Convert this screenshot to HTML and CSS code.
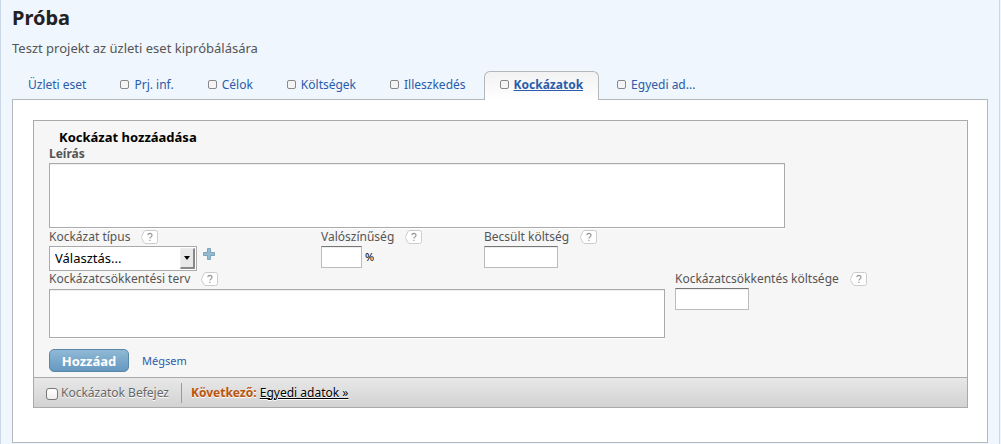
FILE: index.html
```html
<!DOCTYPE html>
<html lang="hu">
<head>
<meta charset="utf-8">
<title>Próba</title>
<link rel="stylesheet" href="styles.css">
</head>
<body>
<svg class="defs" width="0" height="0" aria-hidden="true">
  <symbol id="help" viewBox="0 0 17 15">
    <path d="M5 .5H14.500Q16.500 .5 16.500 2.500V11.500Q16.500 13.500 14.500 13.500H5Q3.500 13.500 2.700 12L.8 8.500Q.4 7.500 .8 6.500L2.700 2Q3.500 .5 5 .5Z" fill="#fff" stroke="#ccc"/>
    <path d="M6.800 5.200Q6.900 3.400 8.900 3.400Q11 3.500 11 5.200Q11 6.200 9.900 6.900Q8.900 7.500 8.900 8.600M8.900 9.700V11" fill="none" stroke="#999" stroke-width="1.200"/>
  </symbol>
</svg>
<div class="page">
  <h1 class="title">Próba</h1>
  <p class="subtitle">Teszt projekt az üzleti eset kipróbálására</p>
  <nav class="tabs">
    <a class="tab" href="#eset">Üzleti eset</a>
    <a class="tab" href="#info"><span class="box"></span>Prj. inf.</a>
    <a class="tab" href="#celok"><span class="box"></span>Célok</a>
    <a class="tab" href="#koltsegek"><span class="box"></span>Költségek</a>
    <a class="tab" href="#illeszkedes"><span class="box"></span>Illeszkedés</a>
    <a class="tab active" href="#kockazatok"><span class="box"></span><span class="current">Kockázatok</span></a>
    <a class="tab" href="#egyedi"><span class="box"></span>Egyedi ad...</a>
  </nav>
  <main class="panel">
    <form class="card">
      <div class="body">
        <h2 class="heading">Kockázat hozzáadása</h2>
        <label class="label strong" for="desc">Leírás</label>
        <textarea class="area desc" id="desc"></textarea>
        <div class="row">
          <div class="field type">
            <div class="label"><label for="type">Kockázat típus</label><svg class="help"><use href="#help"/></svg></div>
            <div class="control">
              <span class="select-wrap">
                <select class="select" id="type"><option>Választás...</option></select>
                <span class="arrow"></span>
              </span>
              <button class="add" type="button" aria-label="+"><svg width="12" height="12" viewBox="0 0 12 12"><path d="M4.500 .5h3v4h4v3h-4v4h-3v-4h-4v-3h4z" fill="#94bad0" stroke="#7ea3bb"/></svg></button>
            </div>
          </div>
          <div class="field chance">
            <div class="label"><label for="chance">Valószínűség</label><svg class="help"><use href="#help"/></svg></div>
            <div class="control"><input class="input small" id="chance" type="text"><span class="unit">%</span></div>
          </div>
          <div class="field">
            <div class="label"><label for="cost">Becsült költség</label><svg class="help"><use href="#help"/></svg></div>
            <div class="control"><input class="input" id="cost" type="text"></div>
          </div>
        </div>
        <div class="row plan-row">
          <div class="field plan">
            <div class="label"><label for="plan">Kockázatcsökkentési terv</label><svg class="help"><use href="#help"/></svg></div>
            <textarea class="area" id="plan"></textarea>
          </div>
          <div class="field">
            <div class="label"><label for="plan-cost">Kockázatcsökkentés költsége</label><svg class="help"><use href="#help"/></svg></div>
            <input class="input" id="plan-cost" type="text">
          </div>
        </div>
        <div class="actions">
          <button class="submit" type="submit">Hozzáad</button>
          <a class="cancel" href="#megsem">Mégsem</a>
        </div>
      </div>
      <div class="footer">
        <label class="done"><input class="check" type="checkbox">Kockázatok Befejez</label>
        <div class="next"><strong class="next-label">Következő:</strong> <a class="next-link" href="#egyedi">Egyedi adatok »</a></div>
      </div>
    </form>
  </main>
</div>
</body>
</html>
```

FILE: styles.css
```css
* { box-sizing: border-box; }
body {
  margin: 0;
  background: #eff6fd;
  color: #555;
  font: 12px/16px "Noto Sans", "Open Sans", sans-serif;
}
.defs { position: absolute; }
.page {
  margin-right: 1px;
  padding: 4px 11px 1px;
  border: solid #c9d7e4;
  border-width: 0 1px;
}
.title { margin: 0; color: #222; font-size: 20px; line-height: 28px; }
.subtitle { margin: 8px 0 15px; font-size: 13px; }
.tabs { display: flex; gap: 2px; }
.tab {
  display: flex;
  align-items: center;
  height: 28px;
  padding: 0 15px 2px;
  border: 1px solid transparent;
  border-bottom: 0;
  color: #2a5caa;
  text-decoration: none;
}
.box {
  width: 9px;
  height: 9px;
  margin-right: 5px;
  border: 1px solid #888;
  border-radius: 2px;
  background: #f4f4f4;
}
.active {
  height: 29px;
  margin-bottom: -1px;
  padding-bottom: 3px;
  border-color: #b4b8bb;
  border-radius: 6px 6px 0 0;
  background: linear-gradient(#f2f2f2, #fff);
  z-index: 1;
}
.current { font-weight: bold; text-decoration: underline; }
.panel {
  padding: 20px 19px 34px 20px;
  border: 1px solid #b4b8bb;
  background: #fff;
}
.card { border: 1px solid #aaa; background: #f6f6f6; }
.body { padding: 8px 15px 5px; }
.heading { margin: 0 0 0 10px; color: #000; font-size: 13px; line-height: 16px; }
.label { display: flex; align-items: center; height: 18px; white-space: nowrap; }
.strong { font-weight: bold; }
.help { width: 17px; height: 15px; margin-left: 11px; }
.area {
  display: block;
  width: 100%;
  height: 49px;
  margin: 0;
  border: 1px solid #aaa;
  background: #fff;
  box-shadow: 0 1px #fff, inset 0 1px #eee;
  resize: none;
}
.desc { max-width: 736px; height: 65px; }
.row { display: flex; }
.type { flex: 0 0 272px; }
.chance { flex: 0 0 163px; }
.control { display: flex; align-items: flex-start; height: 24px; }
.select-wrap { display: grid; width: 148px; }
.select, .arrow { grid-area: 1 / 1; }
.select {
  appearance: none;
  height: 25px;
  padding: 0 5px 2px;
  border: 1px solid #aaa;
  border-radius: 0;
  background: #fff;
  color: #000;
  font: inherit;
  font-size: 13px;
}
.arrow {
  display: grid;
  place-items: center;
  align-self: center;
  justify-self: end;
  width: 15px;
  height: 21px;
  margin-right: 2px;
  border: solid;
  border-width: 1px 2px 2px 1px;
  border-color: #eee #888 #888 #eee;
  background: #e8e8e8;
  pointer-events: none;
}
.arrow::after {
  content: "";
  border: 3px solid transparent;
  border-top: 4px solid #000;
  border-bottom: 0;
}
.add {
  display: flex;
  margin: 2px 0 0 6px;
  padding: 0;
  border: 0;
  background: none;
}
.input {
  display: block;
  width: 74px;
  height: 22px;
  border: 1px solid #bbb;
  border-top-color: #777;
  background: #fff;
  box-shadow: inset 0 1px #eee;
}
.small { width: 41px; }
.unit { margin-left: 3px; color: #000; font-size: 11px; line-height: 22px; }
.plan-row { gap: 10px; }
.plan { flex: 0 1 616px; }
.plan .area { margin-top: 1px; }
.actions { display: flex; align-items: center; gap: 13px; margin-top: 11px; }
.submit {
  width: 80px;
  height: 23px;
  padding: 0;
  border: 1px solid #5a86a8;
  border-radius: 5px;
  background: linear-gradient(#90b9d5, #6698c0);
  color: #fff;
  font: bold 13px/20px "Noto Sans", sans-serif;
}
.cancel { color: #2a5caa; font-size: 11px; text-decoration: none; }
.footer {
  display: flex;
  align-items: center;
  gap: 12px;
  height: 30px;
  padding-left: 12px;
  border-top: 1px solid #aaa;
  background: linear-gradient(#e8e8e8, #d2d2d2);
}
.done { display: flex; align-items: center; gap: 3px; color: #666; text-shadow: 0 1px #fff; }
.check {
  appearance: none;
  width: 12px;
  height: 12px;
  margin: 3px 0 0;
  border: 1px solid #777;
  border-radius: 3px;
  background: linear-gradient(#fff, #eee);
}
.next { padding: 2px 0 2px 9px; border-left: 1px solid #999; text-shadow: 0 1px #fff; }
.next-label { color: #b9540b; }
.next-link { color: #000; }
```
